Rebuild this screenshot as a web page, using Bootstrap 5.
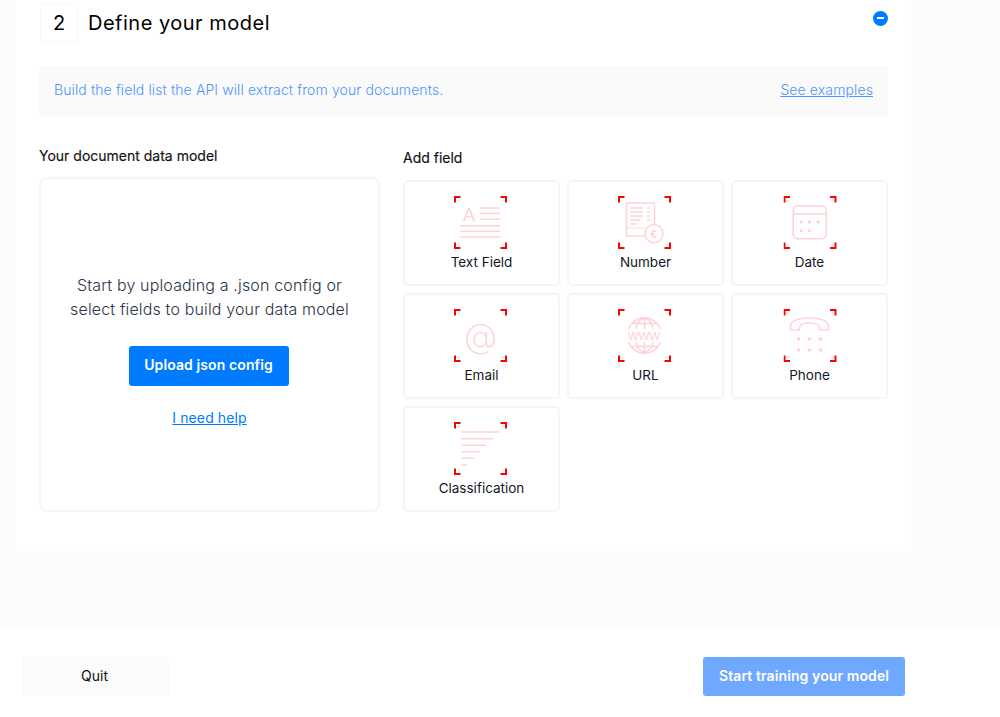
<!DOCTYPE html>
<html lang="en">
<head>
<meta charset="utf-8">
<title>Define your model</title>
<link href="https://cdn.jsdelivr.net/npm/bootstrap@5.3.0/dist/css/bootstrap.min.css" rel="stylesheet">
<style>
html,body{height:717px;overflow:hidden}
body{font-family:Inter,"Liberation Sans",sans-serif;background:#fcfcfc;color:#000}
.work-area{height:627px;padding-left:16px}
.step-panel{width:895px;height:551px;background:#fff;padding:4px 23px 0}
.step-num{width:38px;height:38px;margin-left:1px;border:1px solid #f8f8f8;font-size:20px;line-height:1}
.step-title{font-size:20px;font-weight:400;letter-spacing:.5px;margin:0 0 0 10px;line-height:38px}
.toggle-dot{width:15px;height:15px;border-radius:50%;background:#007bff;top:10.5px;right:23px}
.toggle-dot::after{content:"";position:absolute;left:4px;top:6.5px;width:7px;height:2px;background:#fff}
.info-strip{height:50px;margin-top:24px;background:#fafafa;padding:0 15px 3px;font-size:14px;font-weight:300;letter-spacing:.12px;color:#4f94ff}
.info-strip a{color:#4f94ff}
.model-col{width:341px;margin-right:23px}
.col-head{font-size:14px;font-weight:400;color:#111;line-height:16px}
.head-left{margin:32px 0 13px}
.head-right{margin:34px 0 14px}
.head-left,.head-right{-webkit-text-stroke:.15px #111}
.empty-box{height:335px;border:2px solid #f5f5f6;border-radius:8px;padding-top:94px}
.empty-text{font-size:16px;font-weight:300;letter-spacing:.15px;line-height:24px;color:#2b3345;margin:0}
.upload-btn{width:160px;height:40px;margin:25px 0 0 -2px;background:#007bff;border:0;border-radius:3px;font-size:14px;font-weight:600;letter-spacing:.1px;padding:0 0 3px}
.help-link{display:block;margin-top:22px;font-size:14px;letter-spacing:.1px;color:#007bff;line-height:20px}
.field-grid{display:grid;grid-template-columns:repeat(3,157px);grid-auto-rows:106px;gap:7px}
.field-tile{border:2px solid #f5f5f6;border-radius:5px;padding-top:14px;font-size:13.5px;font-weight:400;color:#111827;line-height:16px}
.field-tile svg{display:block;margin:0 auto 5px}
.field-tile:nth-child(3n) svg{transform:translateX(1.5px)}
.ic{fill:none;stroke:#ffd3d6;stroke-width:1.5}
.ic-fill{fill:#ffd3d6;stroke:none}
.ic-text{fill:#ffd3d6;stroke:none;font-family:"Liberation Sans",sans-serif}
.ic-light{font-family:Inter,sans-serif;font-weight:200}
.corner{fill:none;stroke:#f00;stroke-width:2}
.bottom-bar{height:90px;background:#fff;padding:30px 95px 0 22px}
.quit-btn{width:147px;height:39px;background:#fbfbfb;border:0;border-radius:0;font-size:14px;color:#111;padding:0 2px 2px 0}
.train-btn{width:202px;height:39px;background:#6ea8ff;border:0;border-radius:3px;font-size:14px;font-weight:600;letter-spacing:.1px;color:#fff;padding:0 0 2px}
</style>
</head>
<body>
<svg width="0" height="0" class="position-absolute">
  <defs>
    <g id="corners">
      <path class="corner" d="M1 6.500V1H6.500M46.500 1H52V6.500M1 46.500V52H6.500M46.500 52H52V46.500"/>
    </g>
  </defs>
</svg>
<main class="work-area">
  <section class="step-panel position-relative">
    <div class="d-flex align-items-center">
      <div class="step-num d-flex align-items-center justify-content-center">2</div>
      <h2 class="step-title">Define your model</h2>
    </div>
    <span class="toggle-dot position-absolute"></span>
    <div class="info-strip d-flex align-items-center justify-content-between">
      <span>Build the field list the API will extract from your documents.</span>
      <a href="#">See examples</a>
    </div>
    <div class="d-flex">
      <div class="model-col">
        <div class="col-head head-left">Your document data model</div>
        <div class="empty-box text-center">
          <p class="empty-text">Start by uploading a .json config or<br>select fields to build your data model</p>
          <button type="button" class="btn btn-primary upload-btn">Upload json config</button>
          <a class="help-link" href="#">I need help</a>
        </div>
      </div>
      <div>
        <div class="col-head head-right">Add field</div>
        <div class="field-grid">
          <div class="field-tile text-center">
            <svg width="55" height="53" viewBox="0 0 55 53"><use href="#corners"/><text class="ic-text" x="9" y="24.500" font-size="18">A</text><path class="ic" d="M26 12H46.300M26 17.500H46.300M26 23.300H46.300M6.300 29.700H46.300M6.300 35.300H46.300M6.300 41H46.300"/></svg>
            Text Field
          </div>
          <div class="field-tile text-center">
            <svg width="55" height="53" viewBox="0 0 55 53"><use href="#corners"/><path class="ic" d="M27 40H8.500V7H36.500V28"/><path class="ic" stroke-dasharray="1 1" d="M8.500 32H27"/><path class="ic" d="M12.300 12H25M12.300 16H25M12.300 20H25M12.300 24H22M12.300 28H19M29 12H32M29 16H32M29 20H32M29 24H32"/><circle class="ic" cx="36" cy="37.700" r="9"/><text class="ic-text" x="32.400" y="41.500" font-size="11" font-weight="700">€</text></svg>
            Number
          </div>
          <div class="field-tile text-center">
            <svg width="55" height="53" viewBox="0 0 55 53"><use href="#corners"/><rect class="ic" x="9.700" y="9.700" width="33" height="33" rx="4.500"/><path class="ic" d="M9.700 18H42.700"/><g class="ic-fill"><circle cx="17.700" cy="26" r="1.700"/><circle cx="26" cy="26" r="1.700"/><circle cx="34.700" cy="26" r="1.700"/><circle cx="17.700" cy="34.700" r="1.700"/><circle cx="26" cy="34.700" r="1.700"/></g></svg>
            Date
          </div>
          <div class="field-tile text-center">
            <svg width="55" height="53" viewBox="0 0 55 53"><use href="#corners"/><text class="ic-text ic-light" x="26.700" y="38.500" font-size="34" text-anchor="middle">@</text></svg>
            Email
          </div>
          <div class="field-tile text-center">
            <svg width="55" height="53" viewBox="0 0 55 53"><use href="#corners"/><path class="ic" d="M10.500 20A17 17 0 0 1 42.500 20M10.500 33A17 17 0 0 0 42.500 33M18 20C19 13 22 10 26.500 9.300C31 10 34 13 35 20M18 33C19 39 22 42 26.500 43.300C31 42 34 39 35 33M26.500 9.300V20M26.500 33V43.300M14 14.500H39M14 37.500H39"/><text class="ic-text" x="9.700" y="30.500" font-size="15">www</text></svg>
            URL
          </div>
          <div class="field-tile text-center">
            <svg width="55" height="53" viewBox="0 0 55 53"><use href="#corners"/><path class="ic" d="M7 21V17C7 12 15 9 26 9S45 12 45 17V21H36V18C35 15 31 14 26 14S17 15 16 18V21Z"/><g class="ic-fill"><circle cx="15" cy="30" r="1.800"/><circle cx="26" cy="30" r="1.800"/><circle cx="37" cy="30" r="1.800"/><circle cx="15" cy="41" r="1.800"/><circle cx="26" cy="41" r="1.800"/><circle cx="37" cy="41" r="1.800"/></g></svg>
            Phone
          </div>
          <div class="field-tile text-center">
            <svg width="55" height="53" viewBox="0 0 55 53"><use href="#corners"/><path class="ic" stroke-width="2" d="M7.300 10H45.700M7.300 16.700H39M7.300 23.300H32.300M7.300 29.700H26M7.300 36H19.700M7.300 43H13"/></svg>
            Classification
          </div>
        </div>
      </div>
    </div>
  </section>
</main>
<footer class="bottom-bar d-flex justify-content-between align-items-start">
  <button type="button" class="btn quit-btn">Quit</button>
  <button type="button" class="btn train-btn">Start training your model</button>
</footer>
<script src="https://cdn.jsdelivr.net/npm/bootstrap@5.3.0/dist/js/bootstrap.bundle.min.js"></script>
</body>
</html>
